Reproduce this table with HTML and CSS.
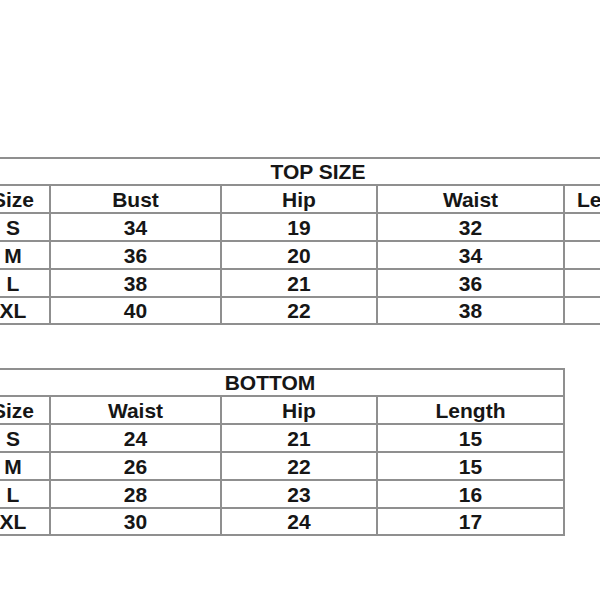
FILE: index.html
```html
<!DOCTYPE html>
<html lang="en">
<head>
<meta charset="utf-8">
<title>Size Chart</title>
<link rel="stylesheet" href="styles.css">
</head>
<body>
<main class="page">
  <section class="chart chart-top">
    <div class="cell title">TOP SIZE</div>
    <div class="cell">Size</div><div class="cell">Bust</div><div class="cell">Hip</div><div class="cell">Waist</div><div class="cell">Length</div>
    <div class="cell">S</div><div class="cell">34</div><div class="cell">19</div><div class="cell">32</div><div class="cell"></div>
    <div class="cell">M</div><div class="cell">36</div><div class="cell">20</div><div class="cell">34</div><div class="cell"></div>
    <div class="cell">L</div><div class="cell">38</div><div class="cell">21</div><div class="cell">36</div><div class="cell"></div>
    <div class="cell">XL</div><div class="cell">40</div><div class="cell">22</div><div class="cell">38</div><div class="cell"></div>
  </section>
  <section class="chart chart-bottom">
    <div class="cell title">BOTTOM</div>
    <div class="cell">Size</div><div class="cell">Waist</div><div class="cell">Hip</div><div class="cell">Length</div>
    <div class="cell">S</div><div class="cell">24</div><div class="cell">21</div><div class="cell">15</div>
    <div class="cell">M</div><div class="cell">26</div><div class="cell">22</div><div class="cell">15</div>
    <div class="cell">L</div><div class="cell">28</div><div class="cell">23</div><div class="cell">16</div>
    <div class="cell">XL</div><div class="cell">30</div><div class="cell">24</div><div class="cell">17</div>
  </section>
</main>
</body>
</html>
```

FILE: styles.css
```css
html, body {
  margin: 0;
  padding: 0;
  background: #ffffff;
  overflow: hidden;
}

.page {
  width: 700px;
  margin-left: -25px;
  padding-top: 157px;
  font-family: "Liberation Sans", Arial, sans-serif;
  font-weight: bold;
  font-size: 21px;
  color: #161616;
}

.chart {
  display: grid;
  gap: 2px;
  padding: 2px;
  background: #8f8f8f;
  grid-template-rows: 25px 26px 26px 26px 26px 25px;
}

.chart-top {
  width: max-content;
  grid-template-columns: 72px 169px 154px 185px 94px;
}

.chart-bottom {
  width: max-content;
  margin-top: 43px;
  grid-template-columns: 72px 169px 154px 185px;
}

.cell {
  background: #ffffff;
  display: flex;
  align-items: center;
  justify-content: center;
  line-height: 1;
  white-space: nowrap;
}

.title {
  grid-column: 1 / -1;
}
```
